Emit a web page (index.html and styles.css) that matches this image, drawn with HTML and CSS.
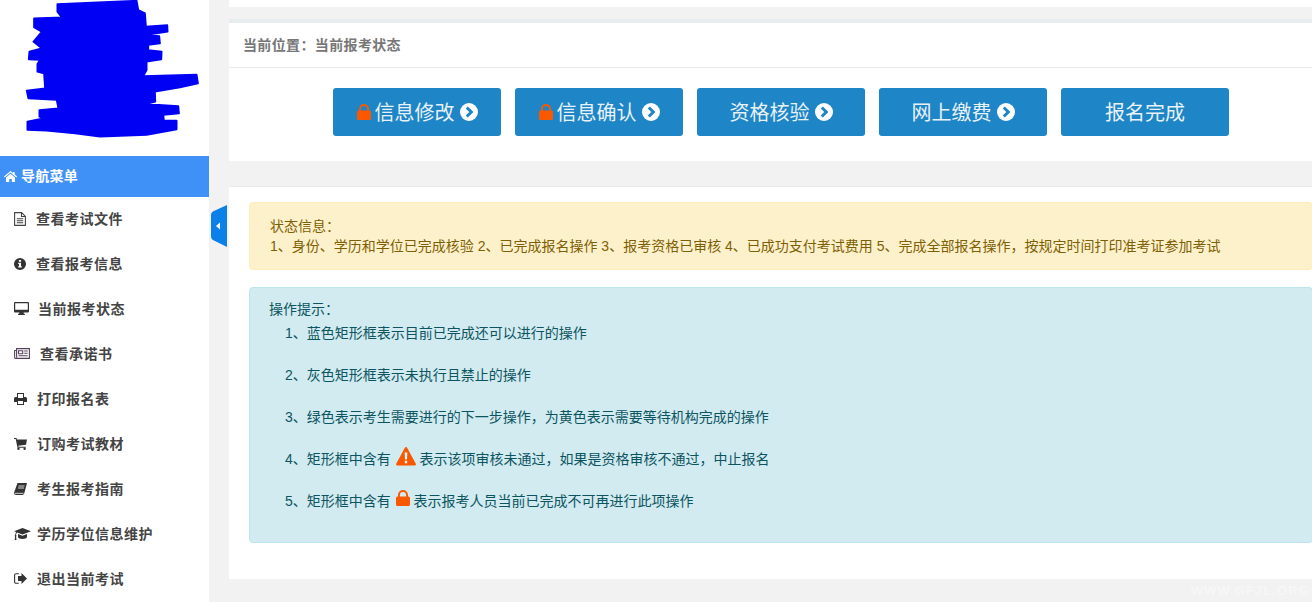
FILE: index.html
```html
<!DOCTYPE html>
<html lang="zh-CN">
<head>
<meta charset="utf-8">
<title>当前报考状态</title>
<link rel="stylesheet" href="styles.css">
</head>
<body>
<div class="page">
  <aside class="sidebar">
    <div class="logo">
      <svg class="scribble" viewBox="0 0 627 468" width="209" height="156"><path fill="#0000f5" stroke="#0000f5" stroke-width="5" stroke-linejoin="round" d="M172 12L410 2L415 30L435 40L438 80L502 75L503 95L440 105L478 108L480 130L445 135L445 150L485 155L484 178L440 185L440 210L430 228L590 224L594 250L540 262L465 275L466 305L440 312L535 318L537 340L490 345L492 362L530 362L530 388L440 405L300 410L225 400L140 392L82 390L82 365L130 355L118 350L118 330L175 325L170 300L85 295L80 272L135 265L132 220L112 215L112 192L120 180L86 178L88 155L125 145L100 125L125 95L102 82L102 55L185 52L172 35Z"/></svg>
    </div>
    <div class="nav-title">
      <svg width="13" height="11" viewBox="0 0 13 11"><path fill="#fff" d="M6.500 0L9 2.100V1h1.700v2.600L13 5.600l-.7.800-5.800-4.900L.7 6.400 0 5.600zM2 6.600l4.500-3.800L11 6.600V11H7.800V8H5.200v3H2z"/></svg>
      <span>导航菜单</span>
    </div>
    <ul class="menu">
      <li class="menu-item"><svg width="12" height="14" viewBox="0 0 12 14"><path fill="none" stroke="#444" stroke-width="1.100" d="M.6.6h7l3.800 3.800v9H.6zM7.500.6v3.900h3.900M2.800 6.700h6.400M2.800 8.700h6.400M2.800 10.700h6.400"/></svg><span>查看考试文件</span></li>
      <li class="menu-item"><svg width="12" height="12" viewBox="0 0 12 12"><path fill="#333" fill-rule="evenodd" d="M6 0a6 6 0 1 1 0 12A6 6 0 0 1 6 0zM4.900 1.900v1.800h2.200V1.900zM4.200 4.800v1.100h.8v2.400h-.8v1.200h3.600V8.300H7V4.800z"/></svg><span>查看报考信息</span></li>
      <li class="menu-item tight"><svg width="15" height="13" viewBox="0 0 15 13"><path fill="#333" fill-rule="evenodd" d="M1 0h13a1 1 0 0 1 1 1v8.500a1 1 0 0 1-1 1H9.500l.4 1.300h1V13H4.100v-1.200h1l.4-1.300H1a1 1 0 0 1-1-1V1a1 1 0 0 1 1-1zM1.200 1.200v6.600h12.600V1.200z"/></svg><span>当前报考状态</span></li>
      <li class="menu-item"><svg width="16" height="11" viewBox="0 0 16 11"><path fill="none" stroke="#54405e" stroke-width="1.100" d="M2.600.6h12.800v9.800H1.500a1 1 0 0 1-.9-1V2.500h2zM2.600 2.500v7M4.500 2.700h4.200v3H4.500zM10.200 3h3.500M10.200 5.300h3.500M4.500 7.800h9.200"/></svg><span>查看承诺书</span></li>
      <li class="menu-item"><svg width="13" height="12" viewBox="0 0 13 12"><path fill="#333" fill-rule="evenodd" d="M3 0h7v4h1.500A1.500 1.500 0 0 1 13 5.500V9h-3v3H3V9H0V5.500A1.500 1.500 0 0 1 1.500 4H3zM4 1v4h5V1zM4 8v3h5V8z"/></svg><span>打印报名表</span></li>
      <li class="menu-item"><svg width="13" height="12" viewBox="0 0 13 12"><path fill="#333" d="M0 0h2.500l.4 1.500H13l-1 5.300-7.700.9.200 1h7.200v1.100H3.500L1.700 1.100H0z"/><circle fill="#333" cx="4.500" cy="10.800" r="1.200"/><circle fill="#333" cx="10.600" cy="10.800" r="1.200"/></svg><span>订购考试教材</span></li>
      <li class="menu-item"><svg width="13" height="12" viewBox="0 0 13 12"><path fill="#333" d="M3.500 0H13l-.3 1.200-2.500 9.300A2 2 0 0 1 8.300 12H2.200A2.200 2.200 0 0 1 0 9.800z"/><path fill="none" stroke="#fff" stroke-width=".8" d="M4.500 3h6M4 5h6M1 10.300h8.500"/></svg><span>考生报考指南</span></li>
      <li class="menu-item wide"><svg width="17" height="12" viewBox="0 0 17 12"><path fill="#333" d="M8.500 0L17 3.200 8.500 6.600 3 4.400c-.7.700-.9 1.500-1 2.500.3.200.5.500.5.800 0 .3-.2.600-.4.700L2.500 12H.7l.4-3.500c-.3-.2-.4-.5-.4-.8 0-.4.200-.7.500-.8.100-1 .4-2 1-2.900L0 3.200z"/><path fill="#333" d="M4 6l4.500 1.800L13 6v3c0 1-2 2-4.500 2S4 10 4 9z"/></svg><span>学历学位信息维护</span></li>
      <li class="menu-item"><svg width="13" height="11" viewBox="0 0 13 11"><path fill="#333" d="M7.500 0L13 5.500 7.500 11V8H4V3h3.500z"/><path fill="none" stroke="#333" stroke-width="1.100" d="M4.800.7H2a1.400 1.400 0 0 0-1.400 1.400v6.800A1.400 1.400 0 0 0 2 10.300h2.800"/></svg><span>退出当前考试</span></li>
    </ul>
  </aside>

  <main class="content">
    <div class="topbar"></div>
    <section class="status-panel">
      <h2 class="crumb">当前位置：当前报考状态</h2>
      <div class="steps">
        <a class="step"><svg class="lock" viewBox="0 0 14 16"><use href="#lock"/></svg><span>信息修改</span><svg class="go" viewBox="0 0 18 18"><use href="#go"/></svg></a>
        <a class="step"><svg class="lock" viewBox="0 0 14 16"><use href="#lock"/></svg><span>信息确认</span><svg class="go" viewBox="0 0 18 18"><use href="#go"/></svg></a>
        <a class="step"><span>资格核验</span><svg class="go" viewBox="0 0 18 18"><use href="#go"/></svg></a>
        <a class="step"><span>网上缴费</span><svg class="go" viewBox="0 0 18 18"><use href="#go"/></svg></a>
        <a class="step"><span>报名完成</span></a>
      </div>
    </section>

    <section class="notes">
      <div class="alert alert-warn">
        <div>状态信息：</div>
        <div>1、身份、学历和学位已完成核验 2、已完成报名操作 3、报考资格已审核 4、已成功支付考试费用 5、完成全部报名操作，按规定时间打印准考证参加考试</div>
      </div>
      <div class="alert alert-info">
        <div>操作提示：</div>
        <ol class="tips">
          <li>1、蓝色矩形框表示目前已完成还可以进行的操作</li>
          <li>2、灰色矩形框表示未执行且禁止的操作</li>
          <li>3、绿色表示考生需要进行的下一步操作，为黄色表示需要等待机构完成的操作</li>
          <li>4、矩形框中含有 <svg class="tip-warn" width="20" height="19" viewBox="0 0 20 19"><path fill="#f95700" d="M10 0c.5 0 .9.300 1.100.7l8.700 16c.4.800-.1 1.800-1 1.800H1.200c-.9 0-1.400-1-1-1.800L8.900.7C9.100.3 9.500 0 10 0z"/><path fill="#fff" d="M8.700 5.500h2.600l-.3 7H9zM8.800 13.800h2.400v2.400H8.800z"/></svg> 表示该项审核未通过，如果是资格审核不通过，中止报名</li>
          <li>5、矩形框中含有 <svg class="tip-lock" width="14" height="16" viewBox="0 0 14 16"><use href="#lock"/></svg> 表示报考人员当前已完成不可再进行此项操作</li>
        </ol>
      </div>
    </section>
  </main>

  <button class="collapse" aria-label="收起菜单"><svg width="16" height="42" viewBox="0 0 16 42"><path fill="#0a80e8" d="M16 0v42L4 36c-2.500-1-4-2-4-4.500V10c0-2.500 1.500-3.500 4-4.500z"/><path fill="#fff" d="M9 17.500v7L5 21z"/></svg></button>
  <div class="watermark">WWW.GFJL.ORG</div>
</div>

<svg class="defs" width="0" height="0">
  <symbol id="lock" viewBox="0 0 14 16"><path fill="#f95700" fill-rule="evenodd" d="M2 6.500V5a5 5 0 0 1 10 0v1.500h.5A1.500 1.500 0 0 1 14 8v6.500a1.500 1.500 0 0 1-1.500 1.500h-11A1.500 1.500 0 0 1 0 14.500V8a1.500 1.500 0 0 1 1.500-1.500zM3.900 6.500h6.200V5a3.100 3.100 0 0 0-6.200 0z"/></symbol>
  <symbol id="go" viewBox="0 0 18 18"><circle cx="9" cy="9" r="9" fill="#fff"/><path fill="none" stroke="#1e85c6" stroke-width="3" d="M6.800 4.500L11.300 9l-4.500 4.500"/></symbol>
</svg>
</body>
</html>
```

FILE: styles.css
```css
* { box-sizing: border-box; }
html, body { margin: 0; height: 100%; overflow: hidden; }
body {
  font-family: "Liberation Sans", "Noto Sans CJK SC", sans-serif;
  font-size: 14px;
  line-height: 20px;
  background: #f2f2f2;
}
.page { position: relative; display: flex; width: 1312px; height: 602px; overflow: hidden; }
.defs { position: absolute; }

.sidebar { flex: 0 0 209px; background: #fff; }
.logo { height: 156px; }
.scribble { display: block; }
.nav-title {
  display: flex; align-items: center; gap: 4px;
  height: 41px; padding: 0 0 1px 4px;
  background: #4091f7; color: #fff; font-weight: 700; letter-spacing: .25px;
}
.menu { list-style: none; margin: 0; padding: 0; }
.menu-item {
  display: flex; align-items: center; gap: 10px;
  height: 45px; padding: 0 0 2px 14px;
  color: #444; font-weight: 700; letter-spacing: .5px;
}
.menu-item svg { flex: none; }
.menu-item.tight { gap: 9px; }
.menu-item.wide { gap: 6px; }

.content { flex: 1; min-width: 0; padding-left: 20px; }
.topbar { height: 7px; background: #fff; margin-bottom: 12px; }
.status-panel { height: 142px; background: #fff; border-top: 4px solid #e7ecee; margin-bottom: 25px; }
.crumb {
  margin: 0; height: 45px; padding-left: 14px;
  font-size: 14px; line-height: 44px; font-weight: 700; color: #777; letter-spacing: .36px;
  border-bottom: 1px solid #e7eaec;
}
.steps { display: flex; gap: 14px; padding: 20px 0 0 104px; }
.step {
  display: flex; align-items: center; justify-content: center;
  flex: 0 0 168px; height: 48px;
  background: #1e85c6; border-radius: 3px;
  color: #e8f2f8; font-size: 20px;
}
.step span { padding-top: 2px; }
.lock { width: 14px; height: 16px; margin-right: 4px; }
.go { width: 18px; height: 18px; margin-left: 5px; }

.notes { height: 393px; background: #fff; border-top: 1px solid #e7eaec; padding: 15px 0 0 20px; }
.alert { margin-right: -1px; border: 1px solid; border-radius: 4px; padding: 13px 20px; }
.alert-warn { background: #fdf1cb; border-color: #fbeebb; color: #7f5f04; margin-bottom: 17px; }
.alert-info { background: #d1ebf0; border-color: #bee5eb; color: #0c5460; padding: 11px 19px 31px; }
.tips { list-style: none; margin: 4px 0 0; padding: 0 0 0 16px; }
.tips li { height: 20px; margin-bottom: 22px; white-space: nowrap; }
.tips li:last-child { margin-bottom: 0; }
.tip-warn { vertical-align: -2px; margin: -4px 0 0 1px; }
.tip-lock { vertical-align: 0; margin: -4px 0 0 1px; }

.collapse {
  position: absolute; left: 211px; top: 205px;
  width: 16px; height: 42px; padding: 0; border: 0; background: none;
}
.collapse svg { display: block; }
.watermark {
  position: absolute; right: 2px; bottom: 3px;
  color: rgba(255, 255, 255, .4); font-size: 13px; line-height: 16px; font-weight: 700; letter-spacing: 1.100px;
}
```
